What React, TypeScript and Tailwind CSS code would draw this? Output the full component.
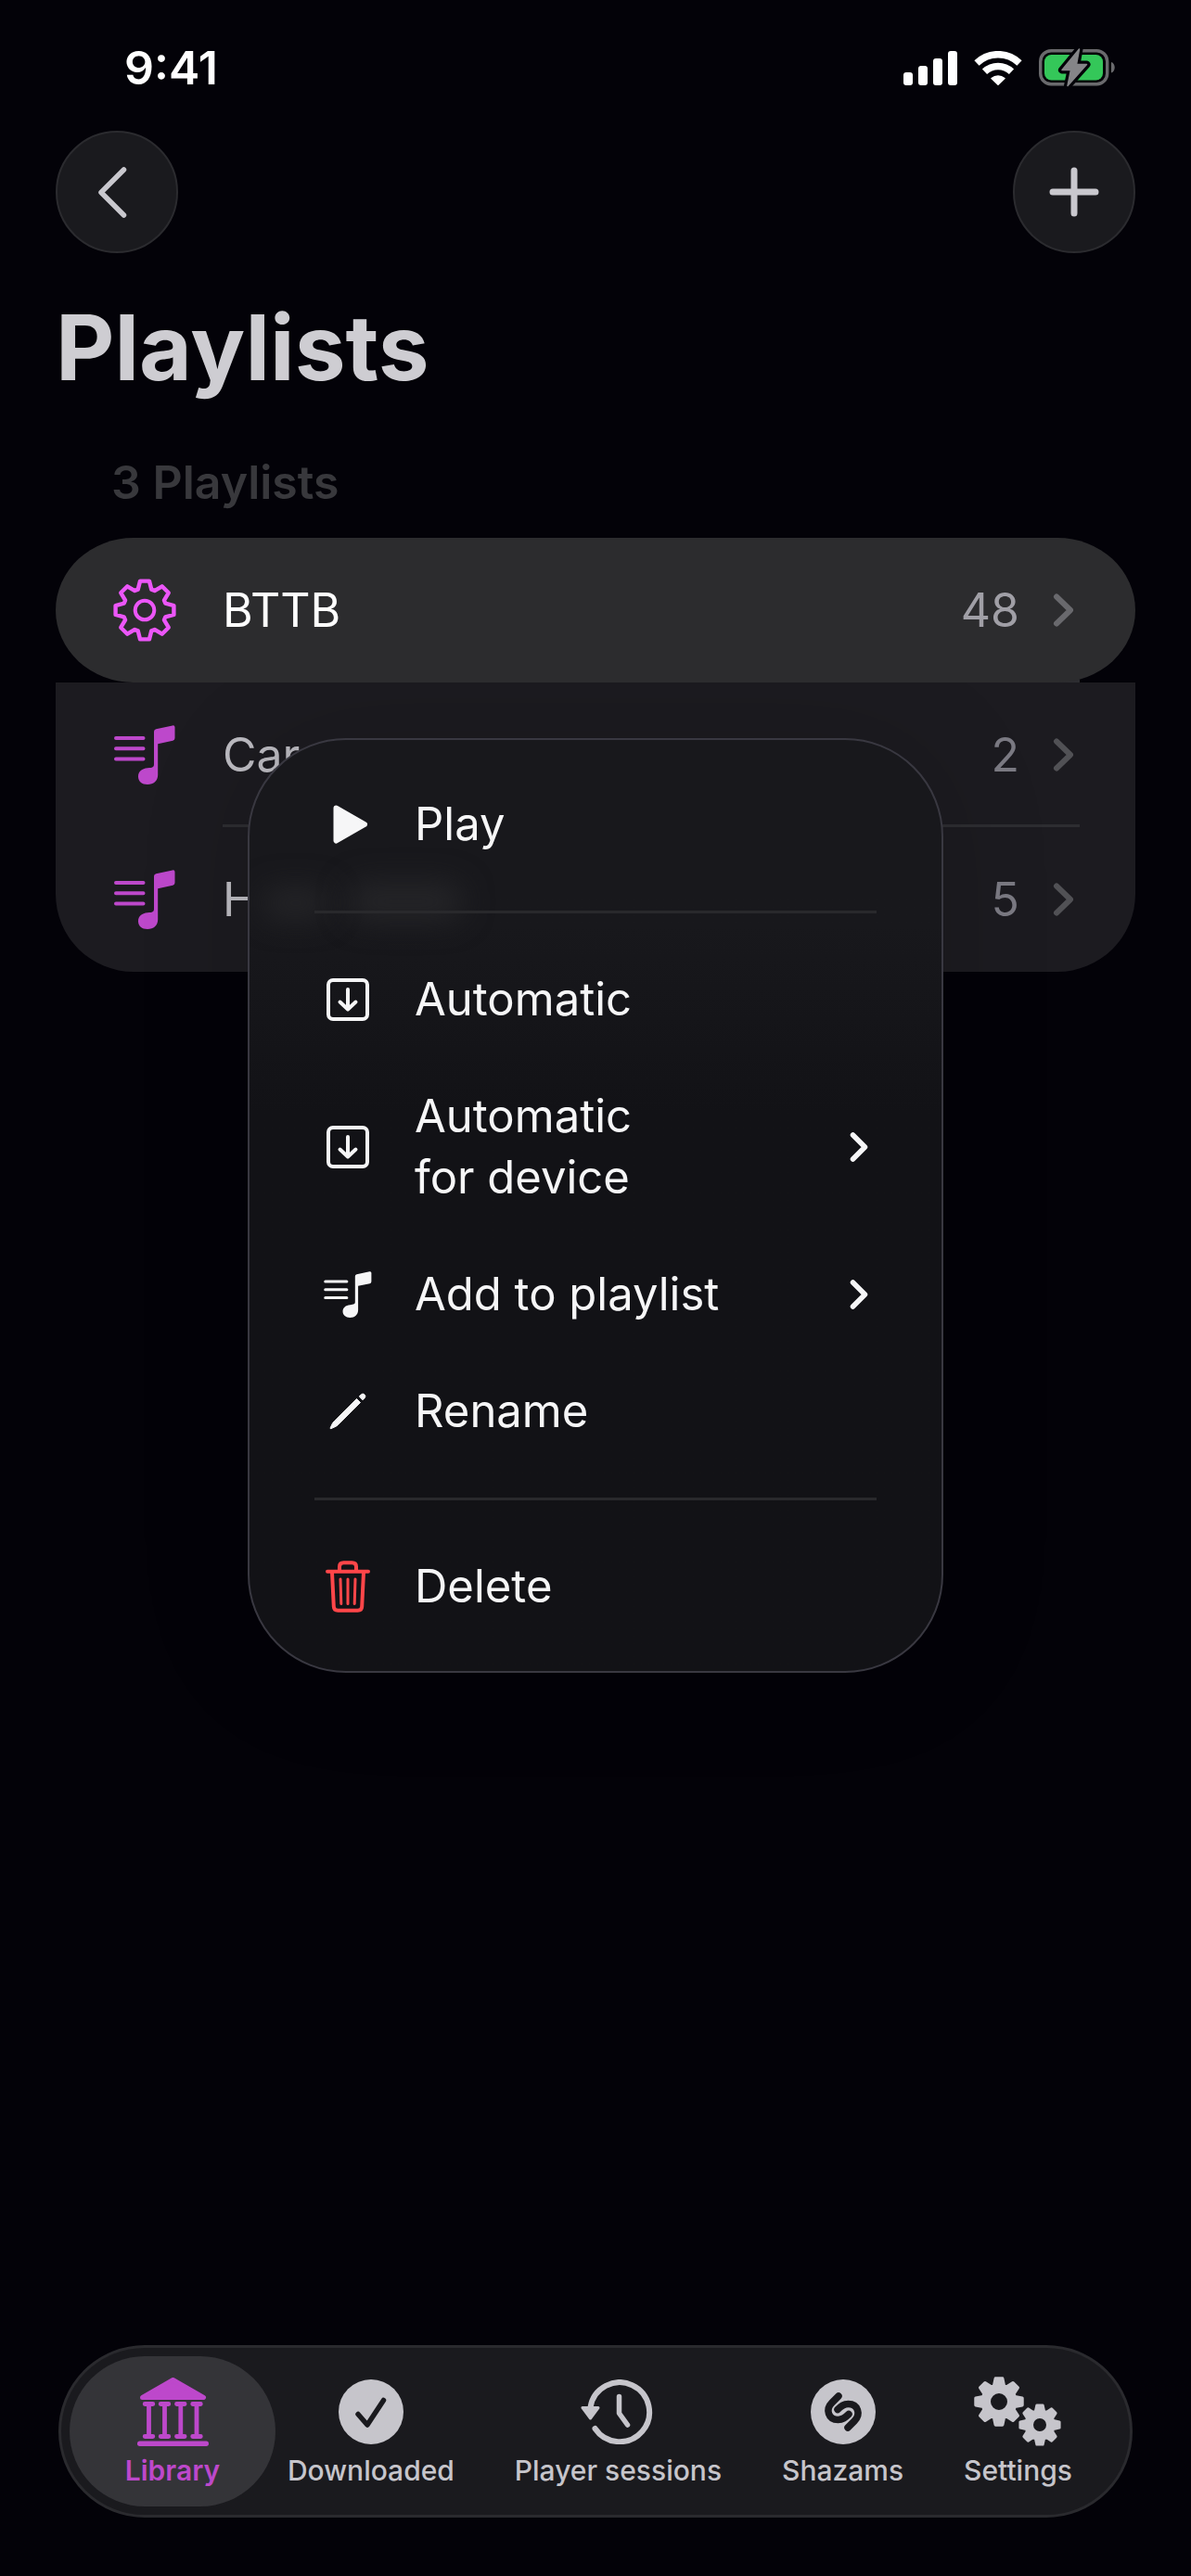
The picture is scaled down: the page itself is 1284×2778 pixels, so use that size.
// App.tsx
// Playlists screen with the context menu of the first playlist open

import React from 'react';

interface Playlist {
    name: string;
    count: number;
    smart?: boolean;
}

interface MenuItem {
    label: React.ReactNode;
    icon: React.ReactNode;
    submenu?: boolean;
}

const playlists: Playlist[] = [
    { name: 'BTTB', count: 48, smart: true },
    { name: 'Car', count: 2 },
    { name: 'H', count: 5 },
];

// Closed outline of an eight-toothed gear
const gearPath = (cx: number, cy: number, outer: number, inner: number, tip: number, root: number) => {
    const points: string[] = [];
    const add = (radius: number, degrees: number) => {
        const a = (degrees * Math.PI) / 180;
        points.push(`${(cx + radius * Math.sin(a)).toFixed(2)} ${(cy - radius * Math.cos(a)).toFixed(2)}`);
    };
    for (let i = 0; i < 8; i++) {
        const base = i * 45;
        add(inner, base - root);
        add(outer, base - tip);
        add(outer, base + tip);
        add(inner, base + root);
    }
    return `M${points.join('L')}Z`;
};

const SignalIcon = () => (
    <svg width="58" height="37" viewBox="0 0 58 37" fill="currentColor" aria-hidden="true">
        <rect x="0" y="23" width="10" height="14" rx="3" />
        <rect x="16" y="16" width="10" height="21" rx="3" />
        <rect x="32" y="8" width="10" height="29" rx="3" />
        <rect x="48" y="0" width="10" height="37" rx="3" />
    </svg>
);

const WifiIcon = () => (
    <svg width="52" height="37" viewBox="0 0 52 37" aria-hidden="true">
        <path d="M3 13A33 33 0 0 1 49 13" fill="none" stroke="currentColor" strokeWidth="7.5" />
        <path d="M11.5 22.3A21 21 0 0 1 40.5 22.3" fill="none" stroke="currentColor" strokeWidth="7.5" />
        <path d="M19 29.5A11 11 0 0 1 33 29.5L26 36.3Z" fill="currentColor" stroke="currentColor" strokeWidth="1.5" strokeLinejoin="round" />
    </svg>
);

const BatteryIcon = () => (
    <svg width="82" height="42" viewBox="0 -1 82 42" aria-hidden="true">
        <rect x="1.7" y="1.7" width="72" height="36" rx="11.5" fill="none" stroke="#6a6a6d" strokeWidth="3.4" />
        <path d="M78 14c5 1.5 5 10 0 11.5z" fill="#6a6a6d" />
        <rect x="6" y="6" width="63" height="27.5" rx="7.5" fill="#34c759" />
        <path
            d="M43.5 0L25 22.5H34.5L31 39.5L51.5 16.5H40.5Z"
            fill="#858588"
            stroke="#030208"
            strokeWidth="8"
            strokeLinejoin="round"
            paintOrder="stroke"
        />
        <path d="M43.5 0L25 22.5H34.5L31 39.5L51.5 16.5H40.5Z" fill="#858588" stroke="#858588" strokeWidth="1.5" strokeLinejoin="round" />
    </svg>
);

const GearIcon = () => (
    <svg width="68" height="68" viewBox="0 0 68 68" fill="none" stroke="currentColor" strokeLinejoin="round" aria-hidden="true">
        <path d={gearPath(34, 34, 31.8, 23.5, 9, 18)} strokeWidth="4.4" />
        <circle cx="34" cy="34" r="10.3" strokeWidth="4" />
    </svg>
);

const NoteListIcon = ({ className }: { className: string }) => (
    <svg viewBox="0 0 66 64" className={className} fill="currentColor" aria-hidden="true">
        <path d="M2 14H31.5M2 25.3H31.5M2 36.5H31.5" stroke="currentColor" strokeWidth="4" strokeLinecap="round" />
        <path d="M43 7Q43 4.8 45.2 4.3L63 .4Q65.5 0 65.5 2.3V14Q65.5 16.3 63.3 16.8L47.2 20.3V53.5C47.2 60 42.5 64 36 64C30 64 26 60.5 26 55.5C26 50 30 46.8 36 46.3C41.5 45.8 43 45.5 43 42Z" />
    </svg>
);

const ChevronIcon = () => (
    <svg width="24" height="38" viewBox="0 0 24 38" fill="none" stroke="currentColor" strokeWidth="6" strokeLinecap="round" strokeLinejoin="round" aria-hidden="true">
        <path d="M4 4.5L19 19L4 33.5" />
    </svg>
);

const SubmenuIcon = () => (
    <svg width="20" height="34" viewBox="0 0 20 34" fill="none" stroke="currentColor" strokeWidth="5.5" strokeLinecap="round" strokeLinejoin="round" aria-hidden="true">
        <path d="M3.5 4L16.5 17L3.5 30" />
    </svg>
);

const PlayIcon = () => (
    <svg width="44" height="42" viewBox="-6 0 44 42" fill="currentColor" stroke="currentColor" strokeWidth="6" strokeLinejoin="round" aria-hidden="true">
        <path d="M3.5 3.5L34 21L3.5 38.5Z" />
    </svg>
);

const DownloadIcon = () => (
    <svg width="46" height="46" viewBox="0 0 46 46" fill="none" stroke="currentColor" strokeWidth="4" strokeLinecap="round" strokeLinejoin="round" aria-hidden="true">
        <rect x="2" y="2" width="42" height="42" rx="5" />
        <path d="M23 12V33M14.5 25.5L23 33.5L31.5 25.5" />
    </svg>
);

const PencilIcon = () => (
    <svg width="40" height="40" viewBox="0 0 40 40" fill="currentColor" stroke="currentColor" strokeWidth="1" strokeLinejoin="round" aria-hidden="true">
        <path d="M29.5 6.5L33.5 10.5L9.5 34.5Q8 36 6 36.8L2 38.6Q.7 39 1.2 37.8L3.2 33.5Q4 32 5.5 30.5Z" />
        <path d="M32.3 4L34.5 1.7Q36.2 .3 38 2Q39.7 3.8 38.3 5.5L36 7.7Z" />
    </svg>
);

const TrashIcon = () => (
    <svg width="48" height="56" viewBox="0 0 48 56" fill="none" stroke="currentColor" strokeWidth="4" strokeLinecap="round" strokeLinejoin="round" aria-hidden="true">
        <path d="M2 11.7H46M15 11V6.5Q15 2.2 19.5 2.2H28.5Q33 2.2 33 6.5V11" />
        <path d="M7 12.5L8.8 49.5Q9 53.8 13.3 53.8H34.7Q39 53.8 39.2 49.5L41 12.5" />
        <path d="M16 20L16.8 46.5M24 20V46.5M32 20L31.2 46.5" strokeWidth="3" />
    </svg>
);

const LibraryIcon = () => (
    <svg width="77" height="74" viewBox="0 0 77 74" fill="currentColor" stroke="currentColor" strokeLinecap="round" strokeLinejoin="round" aria-hidden="true">
        <path d="M38.5 2.5L71.5 21.5H5.5Z" strokeWidth="5" />
        <path d="M2.7 71.3H74.3" strokeWidth="5.4" />
        {[12.5, 29.5, 46.8, 64].map((x) => (
            <path key={x} d={`M${x - 4.3} 28.5H${x + 4.3}M${x - 4.3} 63.5H${x + 4.3}M${x} 28.5V63.5`} strokeWidth="4.8" />
        ))}
    </svg>
);

const DownloadedIcon = () => (
    <svg width="70" height="70" viewBox="0 0 70 70" fill="none" aria-hidden="true">
        <circle cx="35" cy="35" r="35" fill="currentColor" />
        <path d="M21 37.5L31 49L48.5 22.5" stroke="#1a1a1e" strokeWidth="5.5" strokeLinecap="round" strokeLinejoin="round" />
    </svg>
);

// Clock face is centred in the box; the arrow head reaches out to the left
const SessionsIcon = () => (
    <svg width="80" height="70" viewBox="0 0 80 70" fill="none" stroke="currentColor" strokeLinecap="round" strokeLinejoin="round" aria-hidden="true">
        <path d="M10.5 30A32 32 0 1 1 15.5 53" strokeWidth="6" />
        <path d="M41.5 18.5V36.5L50.5 49" strokeWidth="5.5" />
        <path d="M2 30.5H19L10.5 42Z" fill="currentColor" strokeWidth="3" />
    </svg>
);

const ShazamIcon = () => (
    <svg width="70" height="70" viewBox="0 0 70 70" fill="none" aria-hidden="true">
        <circle cx="35" cy="35" r="35" fill="currentColor" />
        <g stroke="#1a1a1e" strokeWidth="7.5" strokeLinecap="round">
            <path d="M30 18L23 25C15.5 32.5 19 43.5 29.5 43.5C34.5 43.5 37 41.5 41 37.5" />
            <path d="M40 52L47 45C54.5 37.5 51 26.5 40.5 26.5C35.5 26.5 33 28.5 29 32.5" />
        </g>
    </svg>
);

const SettingsIcon = () => (
    <svg width="94" height="75" viewBox="0 0 94 75" fill="none" stroke="currentColor" strokeLinejoin="round" aria-hidden="true">
        <path d={`${gearPath(27, 27, 25.5, 18, 8.5, 17.5)}M36 27a9 9 0 1 0-18 0a9 9 0 1 0 18 0Z`} fill="currentColor" fillRule="evenodd" stroke="none" />
        <path d={gearPath(27, 27, 25.3, 18, 8.5, 17.5)} strokeWidth="3.4" />
        <path d={`${gearPath(71, 52, 21.5, 15.5, 8.5, 17.5)}M78 52a7 7 0 1 0-14 0a7 7 0 1 0 14 0Z`} fill="currentColor" fillRule="evenodd" stroke="none" />
        <path d={gearPath(71, 52, 21.3, 15.3, 8.5, 17.5)} strokeWidth="3" />
    </svg>
);

const menuGroups: MenuItem[][] = [
    [{ label: 'Play', icon: <PlayIcon /> }],
    [
        { label: 'Automatic', icon: <DownloadIcon /> },
        { label: <>Automatic<br />for device</>, icon: <DownloadIcon />, submenu: true },
        { label: 'Add to playlist', icon: <NoteListIcon className="h-[50px] w-[52px]" />, submenu: true },
        { label: 'Rename', icon: <PencilIcon /> },
    ],
    [{ label: 'Delete', icon: <span className="text-[#ff4649]"><TrashIcon /></span> }],
];

const tabs = [
    { label: 'Library', icon: <LibraryIcon />, active: true },
    { label: 'Downloaded', icon: <DownloadedIcon /> },
    { label: 'Player sessions', icon: <SessionsIcon /> },
    { label: 'Shazams', icon: <ShazamIcon /> },
    { label: 'Settings', icon: <SettingsIcon /> },
];

const StatusBar: React.FC = () => (
    <div className="flex items-center justify-between pt-[42px] pr-[82px] pl-[134px] text-white">
        <span className="text-[50px] leading-[62px] font-semibold">9:41</span>
        <div className="flex items-center gap-[18px]">
            <SignalIcon />
            <WifiIcon />
            <BatteryIcon />
        </div>
    </div>
);

const PlaylistRow: React.FC<{ playlist: Playlist }> = ({ playlist }) => {
    const { name, count, smart } = playlist;

    return (
        <li className={`group relative ${smart ? 'z-10' : 'bg-[#1c1b20] last:rounded-b-[84px]'}`}>
            <span className="absolute right-[60px] bottom-0 left-[180px] h-[3px] bg-[#2d2d31] group-last:hidden"></span>
            <button
                type="button"
                className={`relative flex h-[156px] w-full items-center pr-[65px] pl-[62px] text-left text-[50px] leading-16 ${
                    smart ? 'rounded-[84px/78px] bg-[#2c2c2e] text-white' : 'text-[#bcbbc1]'
                }`}
            >
                <span className={`flex w-[118px] ${smart ? 'text-[#ec56f8]' : 'pl-px text-[#bd48cb]'}`}>
                    {smart ? <GearIcon /> : <NoteListIcon className="h-16 w-[66px]" />}
                </span>
                <span className="flex-1">{name}</span>
                <span className={smart ? 'text-[#a09fa6]' : 'text-[#7b7a83]'}>{count}</span>
                <span className={`ml-9 ${smart ? 'text-[#69696d]' : 'text-[#515155]'}`}>
                    <ChevronIcon />
                </span>
            </button>
        </li>
    );
};

const ContextMenu: React.FC = () => (
    <div
        role="menu"
        className="absolute top-[216px] left-1/2 w-[750px] -translate-x-1/2 overflow-hidden rounded-[106px] border-2 border-[#393841] bg-linear-to-b from-[#18181c] from-20% to-[#121216] to-40% py-7 text-[49px] leading-[66px] text-[#f6f6f7] shadow-[0_0_120px_rgba(0,0,0,0.15)]"
    >
        {/* Soft traces of the list behind the glass */}
        <div className="absolute top-[160px] left-[14px] h-8 w-[72px] rounded-full bg-[#252528] blur-lg"></div>
        <div className="absolute top-[154px] left-[106px] h-10 w-[124px] rounded-full bg-[#252528] blur-lg"></div>
        {menuGroups.map((group, index) => (
            <div key={index} className="relative">
                {index > 0 && <hr className="mx-[70px] my-[30px] h-[3px] border-0 bg-[#29292c]" />}
                {group.map((item, i) => (
                    <button key={i} type="button" role="menuitem" className="flex w-full items-center py-[30px] pr-[79px] pl-[70px] text-left">
                        <span className="flex w-[72px] justify-center">{item.icon}</span>
                        <span className="ml-9 flex-1">{item.label}</span>
                        {item.submenu && <SubmenuIcon />}
                    </button>
                ))}
            </div>
        ))}
    </div>
);

const TabBar: React.FC = () => (
    <nav className="mx-[63px] mt-auto mb-[63px] flex items-center justify-between rounded-full border-[3px] border-[#2a2a2e] bg-[#1a1a1e] py-[9px] pr-[62px] pl-[9px]">
        {tabs.map((tab) => (
            <a
                key={tab.label}
                href="#"
                aria-current={tab.active ? 'page' : undefined}
                className={`flex h-[162px] flex-col items-center pt-[22px] text-[30px] leading-9 ${
                    tab.active ? '-mr-[52px] w-[222px] rounded-full bg-[#343438] font-semibold text-[#bd48cb]' : 'font-medium text-[#c6c5cb]'
                }`}
            >
                <span className="flex h-[75px] items-center">{tab.icon}</span>
                <span className="mt-2">{tab.label}</span>
            </a>
        ))}
    </nav>
);

const App: React.FC = () => {
    const roundButton =
        'flex h-[132px] w-[132px] items-center justify-center rounded-full border-2 border-[#2b2b2f] bg-[#1a1a1e] text-[#c9c8ce]';

    return (
        <main className="flex min-h-screen flex-col bg-[#030208] font-['Inter',sans-serif]">
            <StatusBar />

            <header className="mt-[37px] px-[60px]">
                <div className="flex items-center justify-between">
                    <button type="button" aria-label="Back" className={roundButton}>
                        <svg width="42" height="56" viewBox="0 0 42 56" fill="none" stroke="currentColor" strokeWidth="5.5" strokeLinecap="round" strokeLinejoin="round">
                            <path d="M28.5 4L4 28.5L28.5 53" />
                        </svg>
                    </button>
                    <button type="button" aria-label="Add playlist" className={roundButton}>
                        <svg width="54" height="54" viewBox="0 0 54 54" fill="none" stroke="currentColor" strokeWidth="7" strokeLinecap="round">
                            <path d="M27 4V50M4 27H50" />
                        </svg>
                    </button>
                </div>
                <h1 className="mt-[42px] text-[98px] leading-[120px] font-bold text-[#cecdd2]">Playlists</h1>
            </header>

            <section className="mt-[53px] px-[60px]">
                <h2 className="px-[60px] text-[50px] leading-16 font-semibold text-[#38383c]">3 Playlists</h2>
                <div className="relative mt-7">
                    <ul>
                        {playlists.map((playlist) => (
                            <PlaylistRow key={playlist.name} playlist={playlist} />
                        ))}
                    </ul>
                    <ContextMenu />
                </div>
            </section>

            <TabBar />
        </main>
    );
};

export default App;
